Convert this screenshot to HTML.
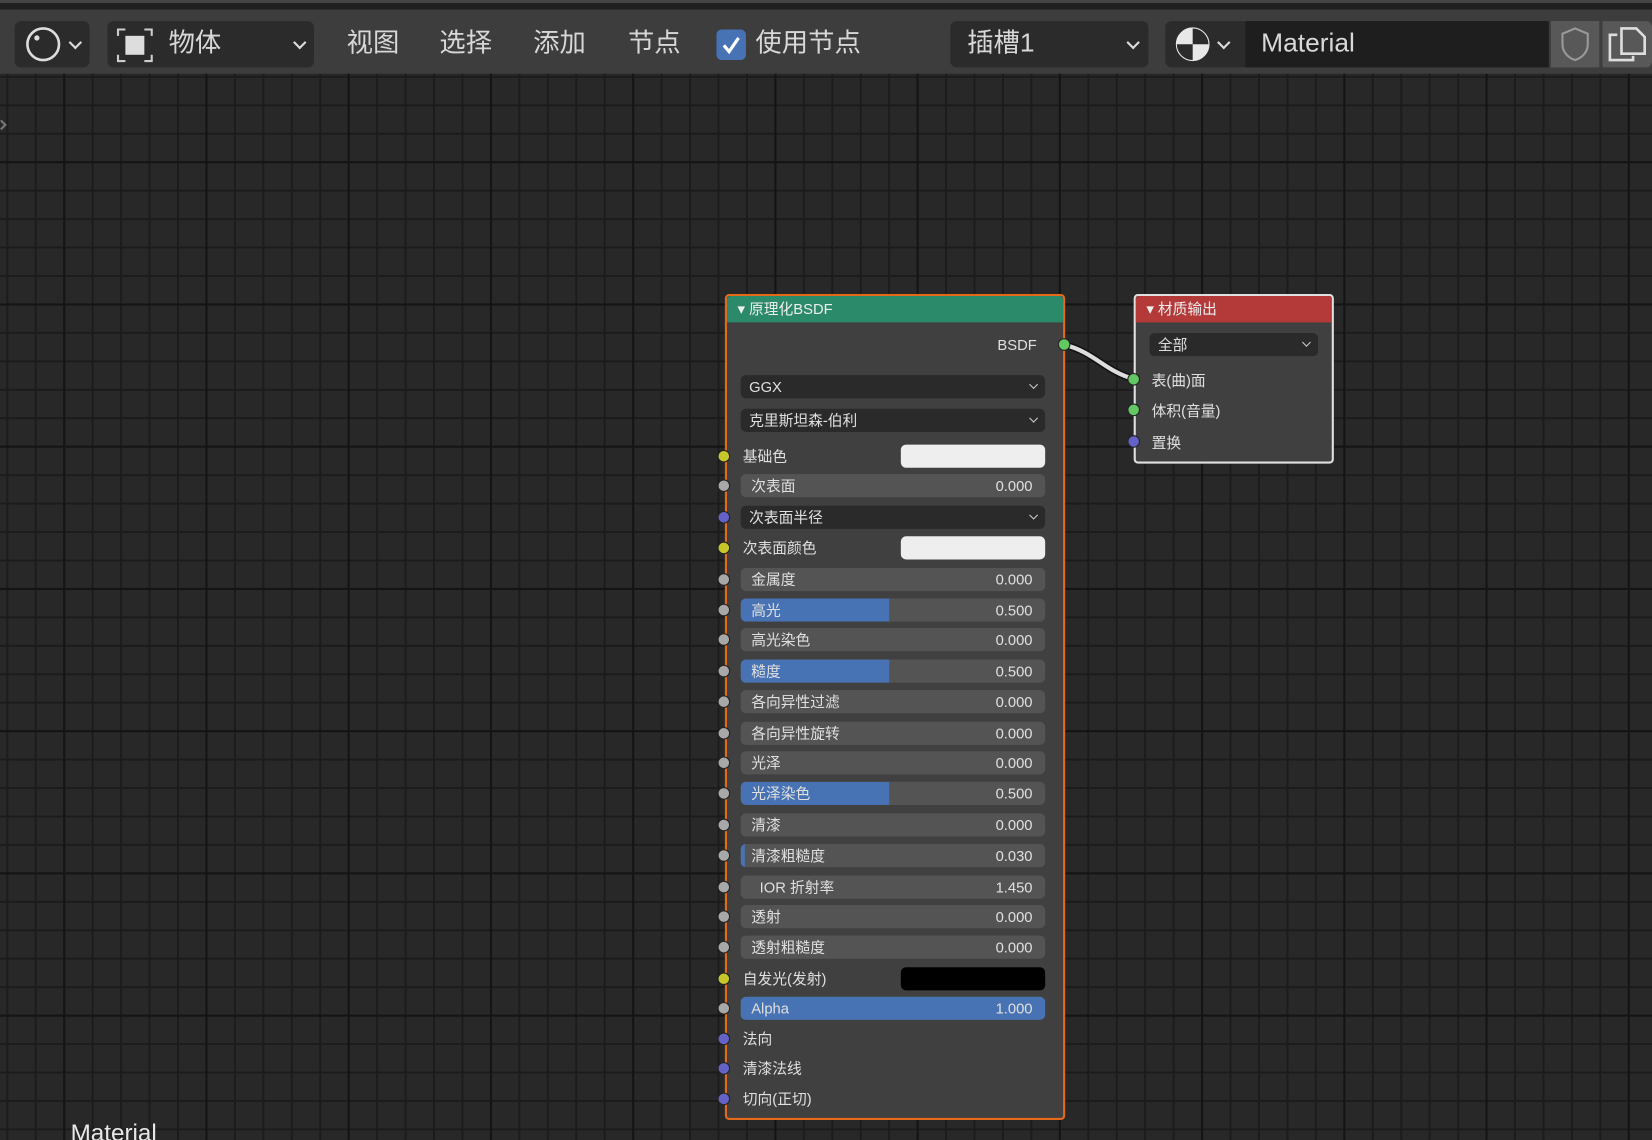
<!DOCTYPE html>
<html><head><meta charset="utf-8"><style>
*{margin:0;padding:0;box-sizing:border-box}
html,body{width:1652px;height:1140px;overflow:hidden;background:#282828}
#w{position:absolute;left:0;top:0;width:1568px;height:1082px;transform:scale(1.0536);transform-origin:0 0;
font-family:"Liberation Sans","Noto Sans CJK SC",sans-serif;color:#e0e0e0;
background-color:#282828;
background-image:
linear-gradient(#141414 2px,transparent 2px),
linear-gradient(90deg,#141414 2px,transparent 2px),
linear-gradient(#1c1c1c 2px,transparent 2px),
linear-gradient(90deg,#1c1c1c 2px,transparent 2px);
background-size:135px 135px,135px 135px,27px 27px,27px 27px;
background-position:0 18px,60px 0,0 18px,-21px 0;overflow:hidden}
.a{position:absolute}
#top{left:0;top:0;width:1568px;height:3px;background:#454545}
#top2{left:0;top:3px;width:1568px;height:6px;background:#1f1f1f}
#hdr{left:0;top:9px;width:1568px;height:61px;background:#3d3d3d}
.btn{position:absolute;background:#2b2b2b;border-radius:6px}
.mt{position:absolute;top:26px;font-size:25px;color:#d8d8d8;line-height:30px}
.chev{position:absolute;width:9px;height:9px;border-right:2px solid #ddd;border-bottom:2px solid #ddd;transform:rotate(45deg)}
.node{position:absolute;background:#404040;border-radius:4px}
.nh{position:absolute;left:0;top:0;right:0;height:25px;border-radius:3px 3px 0 0;font-size:14px;line-height:25px;padding-left:10px;color:#eee}
.row{position:absolute;left:13px;width:289px;height:22px;border-radius:5px;background:#545454;font-size:14px;line-height:22px;overflow:hidden}
.row .f{position:absolute;left:0;top:0;bottom:0;background:#4772b3}
.row .l{position:absolute;left:10px;top:0}
.row .v{position:absolute;right:12px;top:0}
.dd{position:absolute;left:13px;width:289px;height:22px;border-radius:5px;background:#2a2a2a;font-size:14px;line-height:22px;padding-left:8px}
.dd:after{content:"";position:absolute;right:8px;top:6px;width:5px;height:5px;border-right:1.5px solid #ccc;border-bottom:1.5px solid #ccc;transform:rotate(45deg)}
.lab{position:absolute;left:15px;font-size:14px;line-height:22px}
.sw{position:absolute;left:165px;width:137px;height:22px;border-radius:5px}
.so{position:absolute;width:12px;height:12px;border-radius:50%;border:1px solid #222}
.y{background:#c7c729}.g{background:#a8a8a8}.p{background:#6363c7}.gr{background:#63c763}
</style></head><body><div id="w">
<div class="a" id="top"></div><div class="a" id="top2"></div><div class="a" id="hdr"></div>
<div class="a" style="top:115px;width:7px;height:7px;border-right:2px solid #777;border-top:2px solid #777;transform:rotate(45deg);left:-2px"></div>

<div class="btn" style="left:14px;top:20px;width:71px;height:44px"></div>
<svg class="a" style="left:22px;top:24px" width="38" height="36"><circle cx="19" cy="18" r="15" fill="none" stroke="#ddd" stroke-width="2.5"/><circle cx="13" cy="12" r="2.5" fill="#ddd"/></svg>
<div class="chev" style="left:67px;top:36px"></div>
<div class="btn" style="left:102px;top:20px;width:196px;height:44px"></div>
<svg class="a" style="left:110px;top:26px" width="36" height="34"><path d="M2 8V2h7M27 2h7v6M2 26v6h7M27 32h7v-6" fill="none" stroke="#ccc" stroke-width="2"/><rect x="9" y="8" width="18" height="18" fill="#ddd"/></svg>
<div class="mt" style="left:160px">物体</div>
<div class="chev" style="left:280px;top:36px"></div>
<div class="mt" style="left:329px">视图</div>
<div class="mt" style="left:417px">选择</div>
<div class="mt" style="left:506px">添加</div>
<div class="mt" style="left:596px">节点</div>
<svg class="a" style="left:680px;top:28px" width="28" height="29"><rect x="0" y="0" width="28" height="29" rx="5" fill="#4772b3"/><path d="M7 15l5 6 9-13" fill="none" stroke="#fff" stroke-width="3"/></svg>
<div class="mt" style="left:717px">使用节点</div>
<div class="btn" style="left:902px;top:20px;width:188px;height:44px"></div>
<div class="mt" style="left:918px">插槽1</div>
<div class="chev" style="left:1071px;top:36px"></div>
<div class="btn" style="left:1106px;top:20px;width:76px;height:44px;border-radius:6px 0 0 6px"></div>
<svg class="a" style="left:1114px;top:24px" width="36" height="36"><circle cx="18" cy="18" r="15" fill="#e8e8e8" stroke="#e8e8e8" stroke-width="2"/><path d="M18 18H3A15 15 0 0 0 18 33Z" fill="#2b2b2b"/><path d="M18 18V3A15 15 0 0 1 33 18Z" fill="#2b2b2b"/></svg>
<div class="chev" style="left:1157px;top:36px"></div>
<div class="a" style="left:1182px;top:20px;width:288px;height:44px;background:#1e1e1e"></div>
<div class="mt" style="left:1197px">Material</div>
<div class="a" style="left:1472px;top:20px;width:46px;height:44px;background:#585858"></div>
<svg class="a" style="left:1478px;top:24px" width="34" height="36"><path d="M17 3l12 5v10c0 8-6 13-12 15C11 31 5 26 5 18V8z" fill="none" stroke="#999" stroke-width="2"/></svg>
<div class="a" style="left:1521px;top:20px;width:47px;height:44px;background:#585858;border-radius:0 6px 6px 0"></div>
<svg class="a" style="left:1525px;top:24px" width="40" height="36"><path d="M14 3h14l8 8v16H14z" fill="none" stroke="#ddd" stroke-width="2.5"/><path d="M10 9H3v24h22v-4" fill="none" stroke="#ddd" stroke-width="2.5"/></svg>

<svg class="a" style="left:0;top:0" width="1568" height="1082"><path d="M1010 327C1040 335 1048 352 1077 360" stroke="#111" stroke-width="7" fill="none"/><path d="M1010 327C1040 335 1048 352 1077 360" stroke="#ddd" stroke-width="4" fill="none"/></svg>

<div class="node" style="left:688px;top:279px;width:323px;height:784px;border:2px solid #e46a1a">
<div class="nh" style="background:#2a8a6a">▾ 原理化BSDF</div>
<div class="lab" style="left:auto;right:25px;top:35px">BSDF</div>
<div class="dd" style="top:75px">GGX</div>
<div class="dd" style="top:107px">克里斯坦森-伯利</div>
<div class="lab" style="top:141px">基础色</div><div class="sw" style="top:141px;background:#eee"></div>
<div class="row" style="top:169px"><div class="l">次表面</div><div class="v">0.000</div></div>
<div class="dd" style="top:199px">次表面半径</div>
<div class="lab" style="top:228px">次表面颜色</div><div class="sw" style="top:228px;background:#eee"></div>
<div class="row" style="top:258px"><div class="l">金属度</div><div class="v">0.000</div></div>
<div class="row" style="top:287px"><div class="f" style="width:141px"></div><div class="l">高光</div><div class="v">0.500</div></div>
<div class="row" style="top:315px"><div class="l">高光染色</div><div class="v">0.000</div></div>
<div class="row" style="top:345px"><div class="f" style="width:141px"></div><div class="l">糙度</div><div class="v">0.500</div></div>
<div class="row" style="top:374px"><div class="l">各向异性过滤</div><div class="v">0.000</div></div>
<div class="row" style="top:404px"><div class="l">各向异性旋转</div><div class="v">0.000</div></div>
<div class="row" style="top:432px"><div class="l">光泽</div><div class="v">0.000</div></div>
<div class="row" style="top:461px"><div class="f" style="width:141px"></div><div class="l">光泽染色</div><div class="v">0.500</div></div>
<div class="row" style="top:491px"><div class="l">清漆</div><div class="v">0.000</div></div>
<div class="row" style="top:520px"><div class="f" style="width:4px"></div><div class="l">清漆粗糙度</div><div class="v">0.030</div></div>
<div class="row" style="top:550px"><div class="l" style="left:18px">IOR 折射率</div><div class="v">1.450</div></div>
<div class="row" style="top:578px"><div class="l">透射</div><div class="v">0.000</div></div>
<div class="row" style="top:607px"><div class="l">透射粗糙度</div><div class="v">0.000</div></div>
<div class="lab" style="top:637px">自发光(发射)</div><div class="sw" style="top:637px;background:#000"></div>
<div class="row" style="top:665px;background:#4772b3"><div class="l">Alpha</div><div class="v">1.000</div></div>
<div class="lab" style="top:694px">法向</div>
<div class="lab" style="top:722px">清漆法线</div>
<div class="lab" style="top:751px">切向(正切)</div>
</div>
<div class="so gr" style="left:1004px;top:321px"></div>
<div class="so y" style="left:681px;top:427px"></div>
<div class="so g" style="left:681px;top:455px"></div>
<div class="so p" style="left:681px;top:485px"></div>
<div class="so y" style="left:681px;top:514px"></div>
<div class="so g" style="left:681px;top:544px"></div>
<div class="so g" style="left:681px;top:573px"></div>
<div class="so g" style="left:681px;top:601px"></div>
<div class="so g" style="left:681px;top:631px"></div>
<div class="so g" style="left:681px;top:660px"></div>
<div class="so g" style="left:681px;top:690px"></div>
<div class="so g" style="left:681px;top:718px"></div>
<div class="so g" style="left:681px;top:747px"></div>
<div class="so g" style="left:681px;top:777px"></div>
<div class="so g" style="left:681px;top:806px"></div>
<div class="so g" style="left:681px;top:836px"></div>
<div class="so g" style="left:681px;top:864px"></div>
<div class="so g" style="left:681px;top:893px"></div>
<div class="so y" style="left:681px;top:923px"></div>
<div class="so g" style="left:681px;top:951px"></div>
<div class="so p" style="left:681px;top:980px"></div>
<div class="so p" style="left:681px;top:1008px"></div>
<div class="so p" style="left:681px;top:1037px"></div>

<div class="node" style="left:1076px;top:279px;width:190px;height:161px;border:2px solid #e0e0e0">
<div class="nh" style="background:#b43a3a">▾ 材质输出</div>
<div class="dd" style="left:13px;width:160px;top:35px">全部</div>
<div class="lab" style="top:69px">表(曲)面</div>
<div class="lab" style="top:98px">体积(音量)</div>
<div class="lab" style="top:128px">置换</div>
</div>
<div class="so gr" style="left:1070px;top:354px"></div>
<div class="so gr" style="left:1070px;top:383px"></div>
<div class="so p" style="left:1070px;top:413px"></div>

<div class="a" style="left:67px;top:1062px;font-size:23px;color:#e8e8e8">Material</div>
</div></body></html>
